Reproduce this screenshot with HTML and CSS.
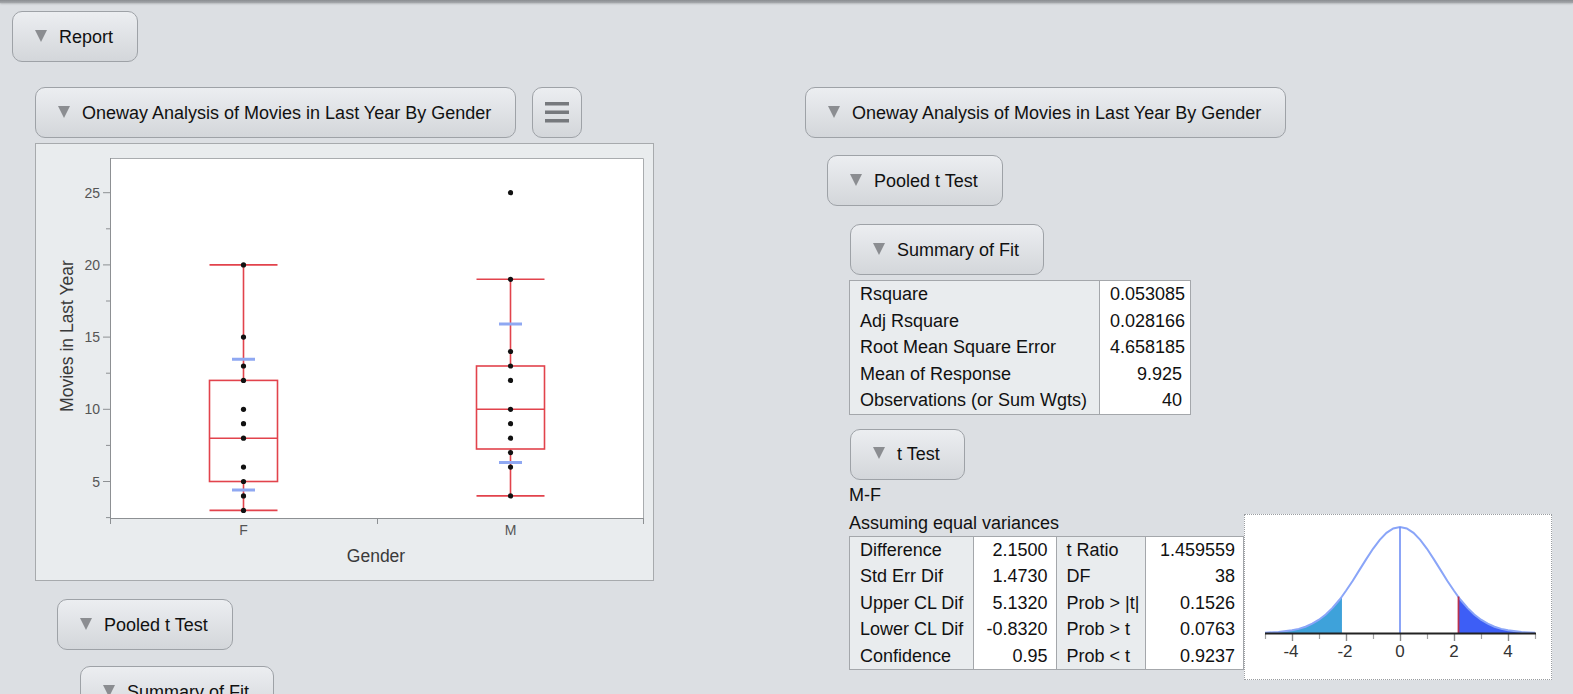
FILE: index.html
```html
<!DOCTYPE html>
<html>
<head>
<meta charset="utf-8">
<title>Report</title>
<link rel="stylesheet" href="styles.css">
</head>
<body>
<div class="topbar"></div>
<div class="page">
  <div class="btn"><span class="tri"></span><span>Report</span></div>
  <div class="columns">
    <div class="col col-left">
      <div class="head-row">
        <div class="btn"><span class="tri"></span><span>Oneway Analysis of Movies in Last Year By Gender</span></div>
        <div class="btn btn-icon">
          <svg width="24" height="21" viewBox="0 0 24 21"><rect x="0" y="0" width="24" height="3.5" fill="#76797d"/><rect x="0" y="8.5" width="24" height="3.5" fill="#76797d"/><rect x="0" y="17" width="24" height="3.5" fill="#76797d"/></svg>
        </div>
      </div>
      <div class="chart-frame">
        <svg class="chart" width="617" height="436" viewBox="0 0 617 436">
          <rect x="74" y="14" width="534" height="360" fill="#ffffff"/>
          <path d="M74.5 14.5H607.5V374" stroke="#a9acaf" fill="none"/>
          <path d="M74.5 14V380M74 374.5H608" stroke="#8d9093" fill="none"/>
          <path d="M67 48.7H74M67 120.9H74M67 193.1H74M67 265.3H74M67 337.5H74" stroke="#8d9093"/>
          <path d="M70 84.8H74M70 157H74M70 229.2H74M70 301.4H74M70 373.6H74" stroke="#8d9093"/>
          <path d="M341.5 374V380M607.5 374V380" stroke="#8d9093"/>
          <g class="tick-lbl" text-anchor="end">
            <text x="64" y="53.7">25</text>
            <text x="64" y="125.9">20</text>
            <text x="64" y="198.1">15</text>
            <text x="64" y="270.3">10</text>
            <text x="64" y="342.5">5</text>
          </g>
          <g class="tick-lbl" text-anchor="middle">
            <text x="207.5" y="391">F</text>
            <text x="474.5" y="391">M</text>
          </g>
          <text class="axis-title" x="340" y="418" text-anchor="middle">Gender</text>
          <text class="axis-title" x="0" y="0" text-anchor="middle" transform="translate(37 192) rotate(-90)">Movies in Last Year</text>
          <g stroke="#e2434c" stroke-width="1.6" fill="none">
            <rect x="173.5" y="236.4" width="68" height="101.1"/>
            <path d="M173.5 294.2H241.5M207.5 236.4V120.9M173.5 120.9H241.5M207.5 337.5V366.4M173.5 366.4H241.5"/>
            <rect x="440.5" y="222" width="68" height="83"/>
            <path d="M440.5 265.3H508.5M474.5 222V135.3M440.5 135.3H508.5M474.5 305V351.9M440.5 351.9H508.5"/>
          </g>
          <g stroke="#8fa8f2" stroke-width="3">
            <path d="M196 215.2H219M196 346H219"/>
            <path d="M463 180.1H486M463 318.4H486"/>
          </g>
          <g fill="#111">
            <circle cx="207.5" cy="120.9" r="2.6"/>
            <circle cx="207.5" cy="193.1" r="2.6"/>
            <circle cx="207.5" cy="222" r="2.6"/>
            <circle cx="207.5" cy="236.4" r="2.6"/>
            <circle cx="207.5" cy="265.3" r="2.6"/>
            <circle cx="207.5" cy="279.7" r="2.6"/>
            <circle cx="207.5" cy="294.2" r="2.6"/>
            <circle cx="207.5" cy="323.1" r="2.6"/>
            <circle cx="207.5" cy="337.5" r="2.6"/>
            <circle cx="207.5" cy="351.9" r="2.6"/>
            <circle cx="207.5" cy="366.4" r="2.6"/>
            <circle cx="474.5" cy="48.7" r="2.6"/>
            <circle cx="474.5" cy="135.3" r="2.6"/>
            <circle cx="474.5" cy="207.5" r="2.6"/>
            <circle cx="474.5" cy="222" r="2.6"/>
            <circle cx="474.5" cy="236.4" r="2.6"/>
            <circle cx="474.5" cy="265.3" r="2.6"/>
            <circle cx="474.5" cy="279.7" r="2.6"/>
            <circle cx="474.5" cy="294.2" r="2.6"/>
            <circle cx="474.5" cy="308.6" r="2.6"/>
            <circle cx="474.5" cy="323.1" r="2.6"/>
            <circle cx="474.5" cy="351.9" r="2.6"/>
          </g>
        </svg>
      </div>
      <div class="btn ind1 mt18"><span class="tri"></span><span>Pooled t Test</span></div>
      <div class="btn ind2 mt16"><span class="tri"></span><span>Summary of Fit</span></div>
    </div>

    <div class="col col-right">
      <div class="btn"><span class="tri"></span><span>Oneway Analysis of Movies in Last Year By Gender</span></div>
      <div class="btn ind1 mt17"><span class="tri"></span><span>Pooled t Test</span></div>
      <div class="btn ind2 mt18"><span class="tri"></span><span>Summary of Fit</span></div>
      <table class="grid fit">
        <tr><td class="lbl">Rsquare</td><td class="val">0.053085</td></tr>
        <tr><td class="lbl">Adj Rsquare</td><td class="val">0.028166</td></tr>
        <tr><td class="lbl">Root Mean Square Error</td><td class="val">4.658185</td></tr>
        <tr><td class="lbl">Mean of Response</td><td class="val">9.925</td></tr>
        <tr><td class="lbl">Observations (or Sum Wgts)</td><td class="val">40</td></tr>
      </table>
      <div class="btn ind2 mt14"><span class="tri"></span><span>t Test</span></div>
      <div class="note mf">M-F</div>
      <div class="ttest-row">
        <div class="ttest-block">
          <div class="note">Assuming equal variances</div>
          <table class="grid tt">
            <colgroup><col class="c1"><col class="c2"><col class="c3"><col class="c4"></colgroup>
            <tr><td class="lbl">Difference</td><td class="val">2.1500</td><td class="lbl">t Ratio</td><td class="val">1.459559</td></tr>
            <tr><td class="lbl">Std Err Dif</td><td class="val">1.4730</td><td class="lbl">DF</td><td class="val">38</td></tr>
            <tr><td class="lbl">Upper CL Dif</td><td class="val">5.1320</td><td class="lbl">Prob &gt; |t|</td><td class="val">0.1526</td></tr>
            <tr><td class="lbl">Lower CL Dif</td><td class="val">-0.8320</td><td class="lbl">Prob &gt; t</td><td class="val">0.0763</td></tr>
            <tr><td class="lbl">Confidence</td><td class="val">0.95</td><td class="lbl">Prob &lt; t</td><td class="val">0.9237</td></tr>
          </table>
        </div>
        <div class="dist">
          <svg width="306" height="164" viewBox="1 1 306 164">
            <path fill="#3ea2da" d="M21 119L21 118.7L34.5 118L48 116.35L54.75 114.9L61.5 112.7L68.25 109.7L75 105.7L81.75 100.5L88.5 93.9L95.25 86L97.95 82.5L97.95 119Z"/>
            <path fill="#3d5ef6" d="M214.05 119L214.05 82.5L216.75 86L223.5 93.9L230.25 100.5L237 105.7L243.75 109.7L250.5 112.7L257.25 114.9L264 116.35L277.5 118L291 118.7L291 119Z"/>
            <path fill="none" stroke="#8aa5f8" stroke-width="2" d="M21 118.7L34.5 118L48 116.35L54.75 114.9L61.5 112.7L68.25 109.7L75 105.7L81.75 100.5L88.5 93.9L95.25 86L97.95 82.5L102 76.8L108.75 66.7L115.5 55.9L122.25 45.1L129 34.8L135.75 25.9L142.5 18.9L149.25 14.5L156 13L162.75 14.5L169.5 18.9L176.25 25.9L183 34.8L189.75 45.1L196.5 55.9L203.25 66.7L210 76.8L214.05 82.5L216.75 86L223.5 93.9L230.25 100.5L237 105.7L243.75 109.7L250.5 112.7L257.25 114.9L264 116.35L277.5 118L291 118.7"/>
            <path stroke="#6f8ff5" stroke-width="1.6" d="M156 13V119"/>
            <path stroke="#b8304e" stroke-width="1.8" d="M214.5 82.5V119"/>
            <path stroke="#a0a0a0" stroke-width="1.2" d="M21.5 120V125M75.5 120V125M129.5 120V125M183.5 120V125M237.5 120V125M291.5 120V125"/>
            <path stroke="#8a8a8a" stroke-width="1.4" d="M48.5 120V127M102.5 120V127M156.5 120V127M210.5 120V127M264.5 120V127"/>
            <path stroke="#222" stroke-width="2" d="M21 119.5H292"/>
            <g class="dist-lbl" text-anchor="middle">
              <text x="47" y="143">-4</text>
              <text x="101" y="143">-2</text>
              <text x="156" y="143">0</text>
              <text x="210" y="143">2</text>
              <text x="264" y="143">4</text>
            </g>
          </svg>
        </div>
      </div>
    </div>
  </div>
</div>
</body>
</html>
```

FILE: styles.css
```css
html, body {
  margin: 0;
  padding: 0;
  overflow: hidden;
  background: #dcdfe3;
  font-family: "Liberation Sans", Arial, sans-serif;
  color: #111;
}

.topbar {
  height: 3px;
  background: linear-gradient(#8a8d91, #a6a9ad);
  box-shadow: 0 1px 2px rgba(0, 0, 0, 0.18);
}

.page {
  padding: 8px 0 0 12px;
}

.btn {
  display: flex;
  align-items: center;
  gap: 12px;
  width: fit-content;
  height: 51px;
  box-sizing: border-box;
  padding: 0 24px 0 22px;
  border: 1px solid #9ea2a7;
  border-radius: 10px;
  background: linear-gradient(#eceef1, #d3d6da);
  font-size: 18px;
  line-height: 20px;
  color: #111;
  white-space: nowrap;
}

.tri {
  width: 0;
  height: 0;
  border-left: 6.5px solid transparent;
  border-right: 6.5px solid transparent;
  border-top: 12px solid #8b8d91;
  margin-top: -2px;
}

.btn-icon {
  width: 50px;
  padding: 0;
  justify-content: center;
}

.columns {
  display: flex;
  align-items: flex-start;
  margin: 25px 0 0 23px;
}

.col {
  display: flex;
  flex-direction: column;
  align-items: flex-start;
}

.col-left {
  width: 619px;
}

.col-right {
  margin-left: 151px;
}

.head-row {
  display: flex;
  gap: 16px;
}

.chart-frame {
  margin-top: 5px;
  width: 619px;
  height: 438px;
  box-sizing: border-box;
  border: 1px solid #a7aaad;
  background: #e9ecee;
}

.chart {
  display: block;
}

.tick-lbl {
  font-family: "Liberation Sans", Arial, sans-serif;
  font-size: 14px;
  fill: #555;
}

.axis-title {
  font-family: "Liberation Sans", Arial, sans-serif;
  font-size: 17.5px;
  fill: #3a3a3a;
}

.ind1 { margin-left: 22px; }
.ind2 { margin-left: 45px; }
.mt14 { margin-top: 14px; }
.mt16 { margin-top: 16px; }
.mt17 { margin-top: 17px; }
.mt18 { margin-top: 18px; }

.grid {
  border-collapse: collapse;
  border: 1px solid #a4a7ab;
  font-size: 18px;
  margin-left: 44px;
}

.grid td {
  padding: 3px 8px 3px 10px;
  line-height: 20.5px;
  white-space: nowrap;
}

.grid td.lbl {
  background: #e9ecee;
  text-align: left;
}

.grid td.val {
  background: #ffffff;
  text-align: right;
  border-left: 1px solid #a4a7ab;
}

.grid td.lbl + td.val + td.lbl {
  border-left: 1px solid #a4a7ab;
}

.fit {
  margin-top: 5px;
  width: 342px;
  table-layout: fixed;
}

.fit td.lbl {
  width: 231px;
}

.note {
  font-size: 18px;
  line-height: 20px;
  margin-left: 44px;
  white-space: nowrap;
}

.mf {
  margin-top: 5px;
}

.ttest-row {
  display: flex;
  align-items: flex-start;
  margin-top: 8px;
  margin-left: 44px;
}

.ttest-block .note {
  margin-left: 0;
}

.tt {
  margin-left: 0;
  margin-top: 3px;
  table-layout: fixed;
  width: 395px;
}

.tt col.c1 { width: 124px; }
.tt col.c2 { width: 82px; }
.tt col.c3 { width: 89px; }
.tt col.c4 { width: 98px; }

.dist {
  margin-top: 1px;
  width: 308px;
  height: 166px;
  box-sizing: border-box;
  border: 1px dotted #9a9da1;
  background: #ffffff;
}

.dist svg {
  display: block;
}

.dist-lbl {
  font-family: "Liberation Sans", Arial, sans-serif;
  font-size: 17px;
  fill: #333;
}
```
